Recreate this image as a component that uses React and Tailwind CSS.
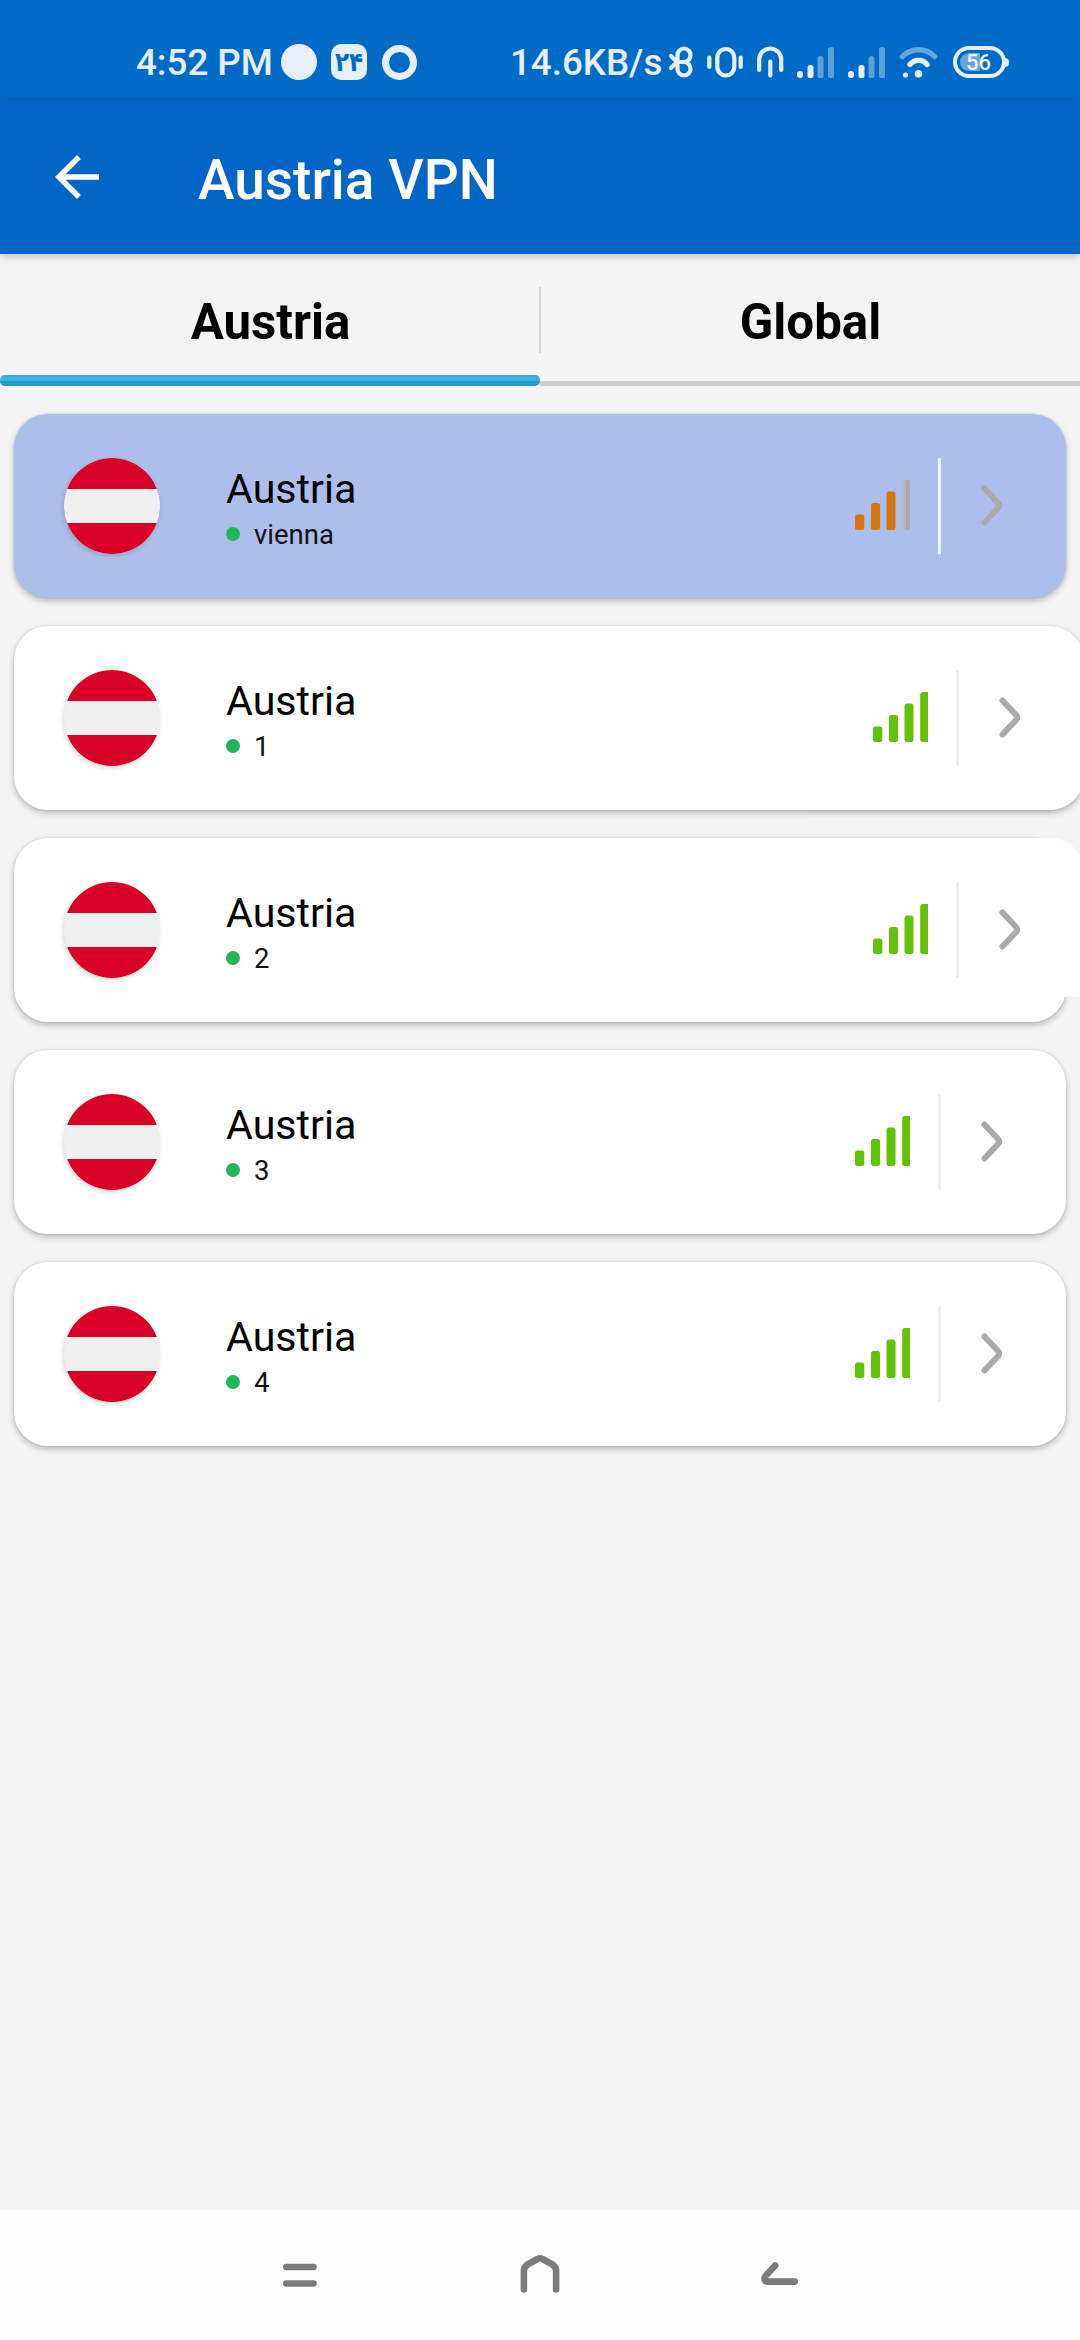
import React, { useState } from "react";

const servers = [
  { id: 0, country: "Austria", label: "vienna", strength: 3, offset: "none" },
  { id: 1, country: "Austria", label: "1", strength: 4, offset: "full" },
  { id: 2, country: "Austria", label: "2", strength: 4, offset: "partial" },
  { id: 3, country: "Austria", label: "3", strength: 4, offset: "none" },
  { id: 4, country: "Austria", label: "4", strength: 4, offset: "none" },
];

const CellSignal = ({ className }) => (
  <svg className={className} width="37" height="32" viewBox="0 0 37 32" fill="#e4effa">
    <rect x="0" y="25" width="6" height="7" rx="3" />
    <rect x="10.5" y="19" width="6" height="13" rx="2.6" />
    <rect x="20.5" y="10" width="6" height="22" rx="2.6" opacity="0.4" />
    <rect x="31" y="1" width="6" height="31" rx="2.6" opacity="0.4" />
  </svg>
);

const StatusBar = () => (
  <div className="h-[100px] bg-[#006bc7] flex items-center pt-[24px] pl-[136px] text-[#e4effa]">
    <span className="w-[145px] pt-[3px] text-[36.7px] leading-none font-medium whitespace-nowrap">
      4:52 PM
    </span>
    <div className="w-9 h-9 rounded-full bg-[#e4effa]" />
    <div className="ml-[14px] w-9 h-9 rounded-[10px] bg-[#e4effa] text-[#006bc7] flex items-center justify-center font-['DejaVu_Sans',sans-serif] font-bold text-[23px] leading-none">
      <span className="block scale-y-115">۲۴</span>
    </div>
    <div className="ml-[15px] w-[35px] h-[35px] rounded-full border-[7px] border-[#e4effa]" />
    <span className="ml-[93px] pt-[3px] w-[158px] text-[36.7px] leading-none font-medium whitespace-nowrap">
      14.6KB/s
    </span>

    {/* Bluetooth, vibrate, headset */}
    <svg
      width="116"
      height="32"
      viewBox="0 0 116 32"
      fill="none"
      stroke="#e4effa"
      strokeWidth="4.2"
      strokeLinecap="round"
      strokeLinejoin="round"
    >
      <path d="M3 10L9 16L3 22" />
      <path d="M9.500 16V9a6.500 6.500 0 0 1 13 0c0 4-3 7-6.500 7H9.500zM9.500 16v7a6.500 6.500 0 0 0 13 0c0-4-3-7-6.500-7" />
      <rect x="49.300" y="3" width="17" height="26.500" rx="8.500" />
      <path d="M41.300 11.500v9.500M72.700 11.500v9.500" />
      <path d="M91.200 24V13.500a11 11 0 0 1 22 0V24M102.300 15.500V29.500" />
    </svg>
    <CellSignal className="ml-[13px]" />
    <CellSignal className="ml-[14px]" />

    {/* Wifi */}
    <svg className="ml-[14px]" width="39" height="32" viewBox="0 0 39 32" fill="none" strokeLinecap="round">
      <path d="M3.500 10.500C12 1.500 27 1.500 35.500 10.500" stroke="#66a6dd" strokeWidth="5.400" />
      <path d="M11 18.500C15.500 13 24 13 28 18.500" stroke="#e4effa" strokeWidth="5.400" />
      <circle cx="6.500" cy="29" r="2.600" fill="#e4effa" />
      <circle cx="19.500" cy="27.800" r="3.800" fill="#e4effa" />
    </svg>

    {/* Battery */}
    <div className="ml-[15px] flex items-center">
      <div className="w-[53px] h-8 rounded-full border-4 border-[#e4effa] flex items-center p-[3px]">
        <div className="w-[20px] h-[18px] rounded-l-full bg-[#66a6dd]" />
        <span className="-ml-[14px] pt-[1px] text-[22px] leading-none font-medium text-[#f4f9fe]">56</span>
      </div>
      <div className="-ml-[1px] w-[4px] h-[9px] rounded-r-full bg-[#e4effa]" />
    </div>
  </div>
);

const AppHeader = () => (
  <header className="relative z-10 h-[154px] bg-[#0365c5] flex items-center shadow-[0_2px_9px_rgba(0,0,0,0.22)]">
    <svg className="ml-[44px]" width="66" height="66" viewBox="0 0 24 24" fill="#fff">
      <path d="M20 11H7.830l5.590-5.590L12 4l-8 8 8 8 1.410-1.410L7.830 13H20v-2z" />
    </svg>
    <h1 className="ml-[88px] mt-[7px] text-[55px] leading-none font-medium text-white whitespace-nowrap">
      Austria VPN
    </h1>
  </header>
);

const Tabs = ({ active, onChange }) => (
  <div className="h-[132px] flex relative">
    {["Austria", "Global"].map((name) => (
      <button
        key={name}
        onClick={() => onChange(name)}
        className="w-1/2 flex flex-col text-[49.2px] leading-none font-bold text-black"
      >
        <span className="h-[121px] pt-[44px] pl-[1px] text-center w-full">{name}</span>
        {active === name ? (
          <span className="block w-full h-[11px] rounded-[5px] bg-[linear-gradient(to_bottom,#41a9d0_0px,#41a9d0_2px,#33b5e5_2px,#33b5e5_6px,#2699bf_6px)]" />
        ) : (
          <span className="block w-full h-[5px] mt-[6px] bg-[#cecece]" />
        )}
      </button>
    ))}
    <div className="absolute left-[539px] top-[33px] w-[2px] h-[66px] bg-[#d3d3d3]" />
  </div>
);

const Flag = () => (
  <div className="w-24 h-24 rounded-full overflow-hidden flex flex-col bg-[#efefef] shadow-[-1px_2px_5px_rgba(0,0,0,0.16)]">
    <div className="h-[31px] bg-[#d80027]" />
    <div className="h-[34px]" />
    <div className="h-[31px] bg-[#d80027]" />
  </div>
);

const Strength = ({ value }) => {
  const color = value === 4 ? "#63c108" : "#d57510";
  return (
    <svg width="56" height="50" viewBox="0 0 56 50" fill={color}>
      <rect x="0" y="34.500" width="9.300" height="15.500" rx="2.500" />
      <rect x="16" y="23" width="9" height="27" rx="2.500" />
      <rect x="31.500" y="11.500" width="9" height="38.500" rx="2.500" />
      {value === 4 ? (
        <path d="M47.200 3a3 3 0 0 1 3-3H55v50h-5.300a2.500 2.500 0 0 1-2.500-2.500z" />
      ) : (
        <>
          <rect x="47.200" y="0" width="5" height="50" rx="2.500" fill="#bbb9bd" />
          <path d="M50.500 0H53a2 2 0 0 1 2 2v46a2 2 0 0 1-2 2h-2.500z" fill="#a9a9a9" />
        </>
      )}
    </svg>
  );
};

const ServerCard = ({ server, selected, onSelect }) => {
  const { country, label, strength, offset } = server;
  return (
    <div
      onClick={() => onSelect(server.id)}
      className={`relative h-[184px] rounded-[34px] flex items-center shrink-0 shadow-[0_3px_6px_rgba(0,0,0,0.24),0_0_3px_rgba(0,0,0,0.12)] ${
        offset === "full" ? "w-[1070px]" : "w-[1052px]"
      } ${selected ? "bg-[#aebeea]" : "bg-white"}`}
    >
      {offset === "full" && (
        <div className="absolute left-[794px] right-[34px] top-full h-[7px] bg-linear-to-b from-black/5 to-transparent" />
      )}
      {offset === "partial" && (
        <div className="absolute right-[-18px] top-0 w-[90px] h-[159px] rounded-tr-[34px] bg-white" />
      )}
      <div className="ml-[50px]">
        <Flag />
      </div>
      <div className="ml-[66px] w-[400px] pt-[7px]">
        <div className="text-[41.200px] leading-[48px] text-black">{country}</div>
        <div className="flex items-center h-[40px] mt-[1px]">
          <span className="w-[14px] h-[14px] rounded-full bg-[#22b658]" />
          <span className="ml-[14px] pt-[2px] text-[27.500px] leading-none text-[#111]">{label}</span>
        </div>
      </div>
      <div
        className={`relative flex items-center ${
          offset === "none" ? "ml-[229px]" : "ml-[247px]"
        }`}
      >
        <div className="pb-[2px]">
          <Strength value={strength} />
        </div>
        <div
          className={`ml-[27px] w-[3px] h-24 ${selected ? "bg-[#f2f5fc]" : "bg-[#ededed]"}`}
        />
        <svg
          className="ml-[40px]"
          width="22"
          height="42"
          viewBox="0 0 22 42"
          fill="none"
          stroke="#aaa"
          strokeWidth="6"
          strokeLinecap="round"
          strokeLinejoin="round"
        >
          <path d="M3.500 3.500L17.300 18.200Q19 20.500 17.300 22.800L3.500 37.500" />
        </svg>
      </div>
    </div>
  );
};

const NavBar = () => (
  <nav className="h-[130px] bg-[#fefefe]">
    <svg
      width="1080"
      height="130"
      viewBox="0 0 1080 130"
      fill="none"
      stroke="#7b7b7b"
      strokeWidth="6.600"
      strokeLinecap="round"
      strokeLinejoin="round"
    >
      <path d="M286.300 57H313.500M286.300 73.500H313.500" />
      <path d="M523.900 79.500V61Q523.900 57 527.500 54.500L537.500 49Q540 47.500 542.500 49L552.500 54.500Q556.100 57 556.100 61V79.500" />
      <path d="M775.200 55.500L765.500 66Q763.500 69 765.500 71.300Q766.500 71.600 768 71.600H794.800" />
    </svg>
  </nav>
);

export default function App() {
  const [tab, setTab] = useState("Austria");
  const [selectedId, setSelectedId] = useState(0);

  return (
    <div className="w-[1080px] h-[2340px] overflow-hidden flex flex-col bg-[#f4f4f4] font-[Roboto,sans-serif]">
      <StatusBar />
      <AppHeader />
      <Tabs active={tab} onChange={setTab} />

      <main className="flex-1 flex flex-col items-start gap-7 pt-7 pl-[14px]">
        {servers.map((server) => (
          <ServerCard
            key={server.id}
            server={server}
            selected={server.id === selectedId}
            onSelect={setSelectedId}
          />
        ))}
      </main>

      <NavBar />
    </div>
  );
}
